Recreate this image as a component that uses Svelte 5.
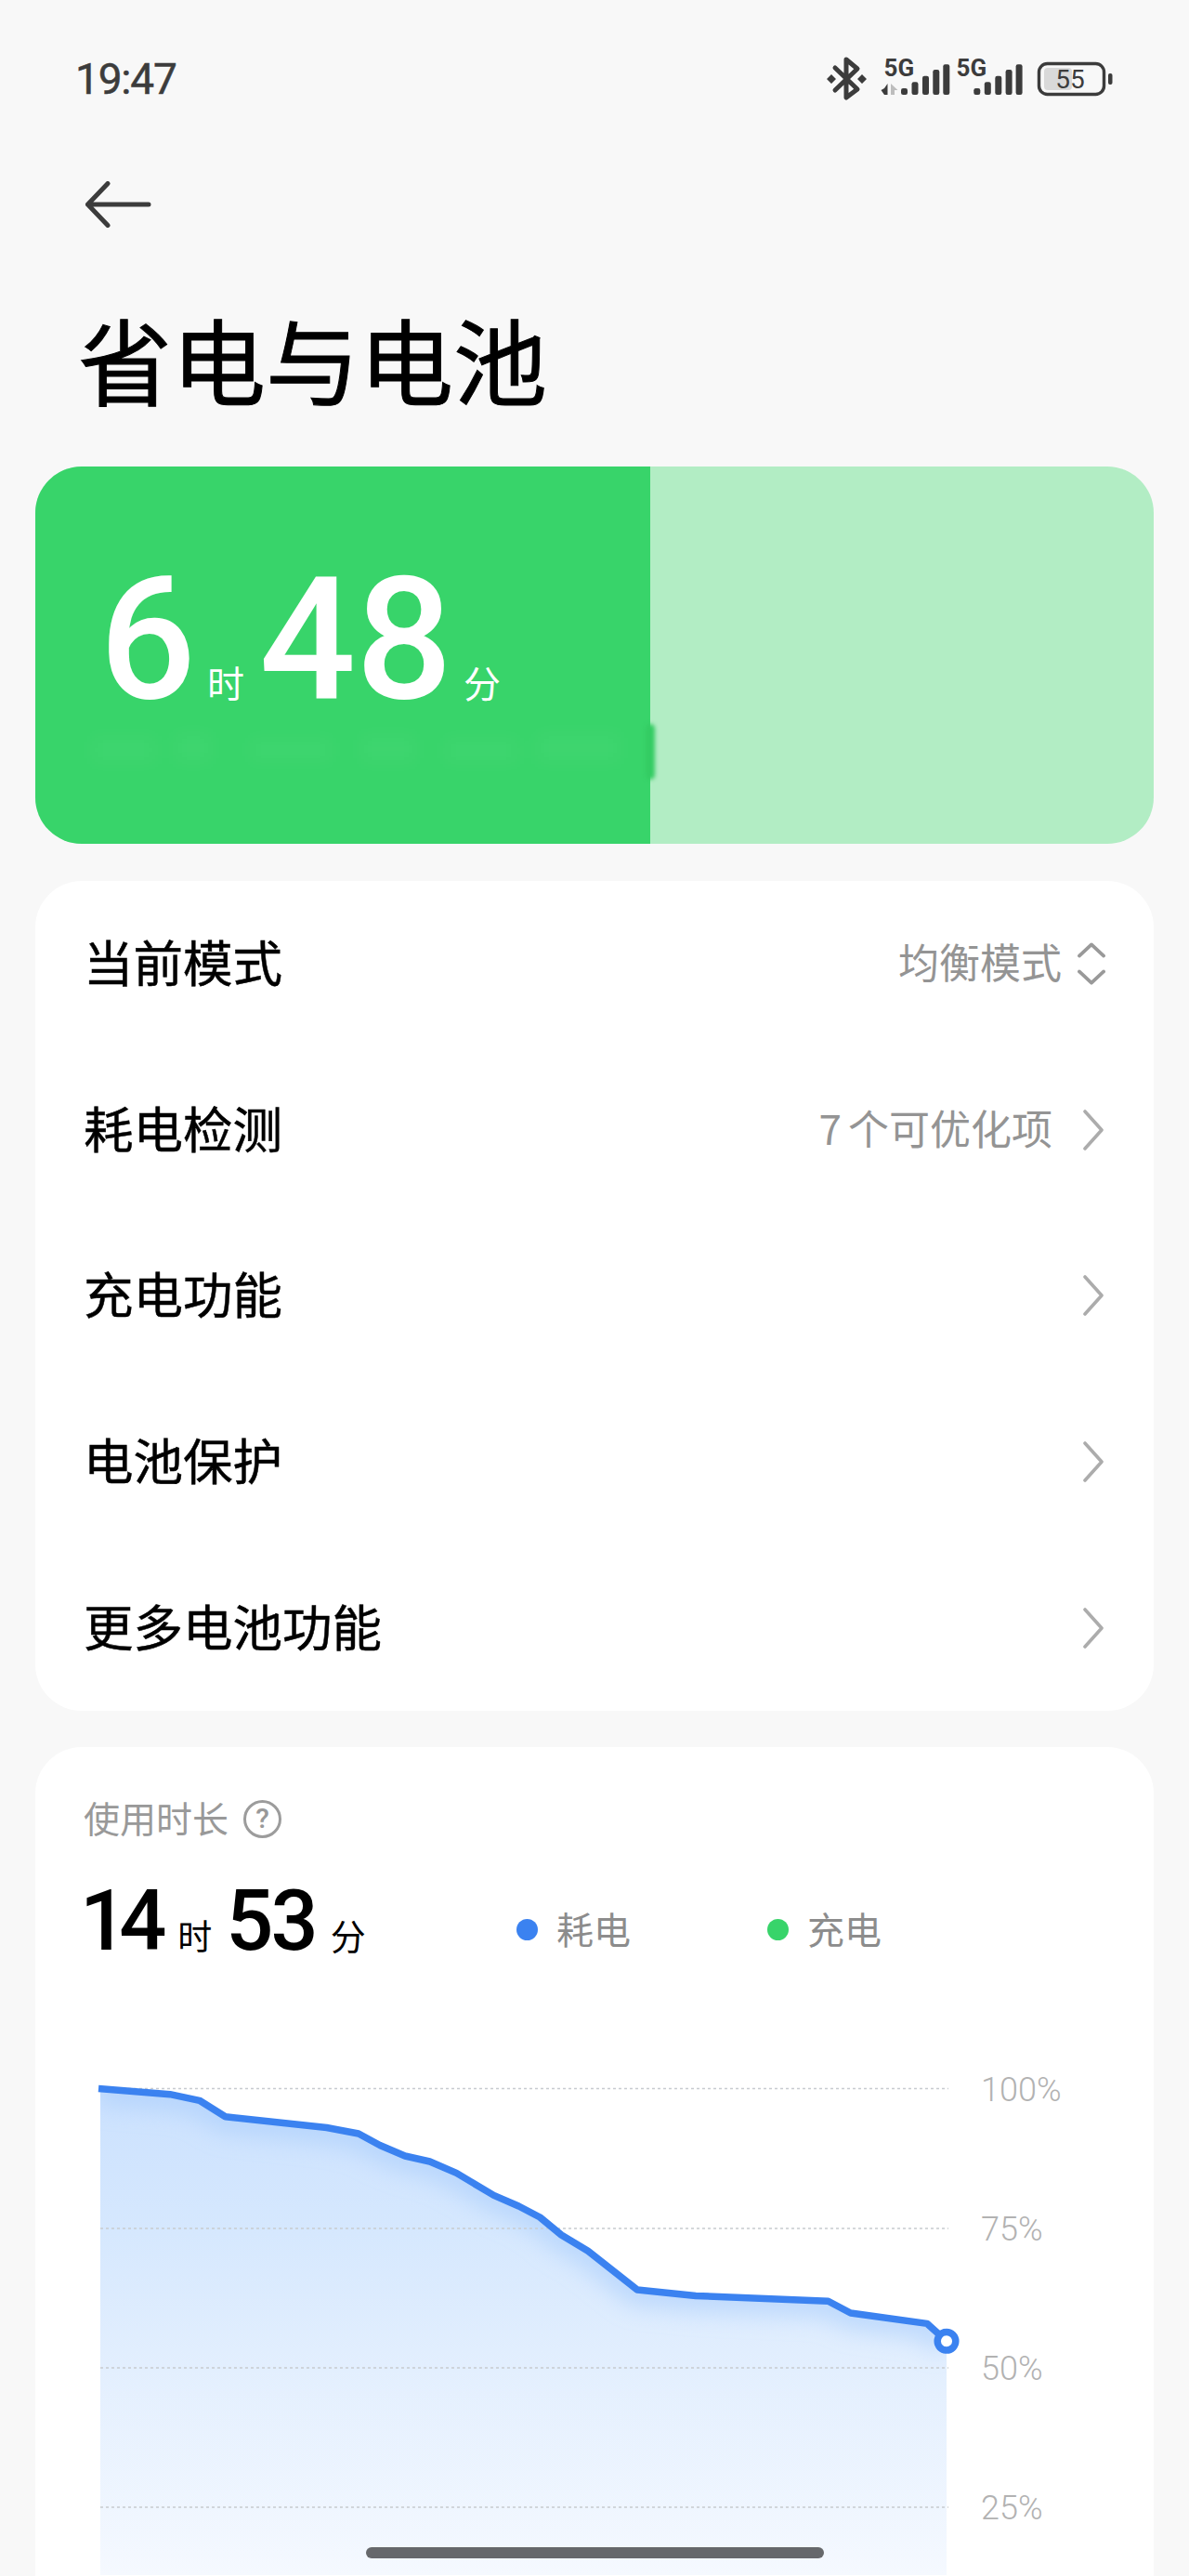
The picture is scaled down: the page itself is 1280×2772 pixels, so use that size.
<script>
  const rows = [
    { label: '当前模式', num: '', value: '均衡模式', kind: 'updown' },
    { label: '耗电检测', num: '7', value: '个可优化项', kind: 'next' },
    { label: '充电功能', num: '', value: '', kind: 'next' },
    { label: '电池保护', num: '', value: '', kind: 'next' },
    { label: '更多电池功能', num: '', value: '', kind: 'next' }
  ];
  const pts = [
    [106,2248.5],[183,2254.7],[214.7,2261.3],[242.6,2278.8],[351.7,2290.5],[386,2297],[409,2309.5],
    [436,2321],[462.7,2327],[491.4,2339.4],[531.6,2363.4],[558.4,2375],[581.3,2387],[604.3,2406],
    [633,2423.3],[686,2465],[749,2471.4],[891.6,2477.3],[915.7,2490],[998,2501.4],[1019,2520.3]
  ];
  const line = pts.map((p) => p.join(',')).join(' ');
  const area = `108,2248.5 ${pts.slice(1).map((p) => p.join(',')).join(' ')} 1019,2772 108,2772`;
  const grid = [
    { y: 2248.5, t: '100%' },
    { y: 2399, t: '75%' },
    { y: 2549, t: '50%' },
    { y: 2699, t: '25%' }
  ];
  const bars = [[0,95],[11.5,88.3],[23,81.7],[34.3,75],[45.3,69.3]];
  const patches = [
    [60,8,70,30],[150,4,40,34],[230,10,90,26],[350,6,60,32],[440,10,80,28],[540,4,90,34]
  ];
</script>

<div class="page">
  <header class="status">
    <span class="clock">19:47</span>
    <svg class="status-icons" viewBox="885 55 320 60" width="320" height="60" aria-hidden="true">
      <g fill="none" stroke="#3c3c3c" stroke-width="5" stroke-linecap="round" stroke-linejoin="round">
        <path d="M899 73 923 96 911 105V64L923 74 899 97" />
      </g>
      <path d="M895 80l5 5-5 5-5-5zM928 80l5 5-5 5-5-5z" fill="#3c3c3c" />
      <text class="five" x="951.5" y="82">5G</text>
      <text class="five" x="1029.5" y="82">5G</text>
      <polygon points="955.5,90 955.5,102 952,102 948.5,97 952,95" fill="#3c3c3c" />
      <polygon points="959,90 966.5,97 963,97 963,102 959,102" fill="#bdbdbd" />
      {#each bars as b}
        <rect x={970 + b[0]} y={b[1]} width="7" height={102 - b[1]} rx="2.2" fill="#3c3c3c" />
        <rect x={1048.3 + b[0]} y={b[1]} width="7" height={102 - b[1]} rx="2.2" fill="#3c3c3c" />
      {/each}
      <rect x="1118.5" y="68.5" width="70" height="33" rx="9" fill="none" stroke="#3c3c3c" stroke-width="3.4" />
      <rect x="1124" y="73" width="30" height="24" rx="4" fill="#d9d9d9" />
      <text class="batt" x="1152" y="95" text-anchor="middle">55</text>
      <rect x="1193" y="79" width="4.5" height="12" rx="2" fill="#3c3c3c" />
    </svg>
  </header>

  <nav class="nav">
    <svg viewBox="0 0 72 50" width="72" height="50" aria-hidden="true">
      <path d="M25 2.5 3.5 25 25 47.5M3.5 25H69" fill="none" stroke="#3c3c3c" stroke-width="5" stroke-linecap="round" stroke-linejoin="round" />
    </svg>
  </nav>

  <h1 class="title">省电与电池</h1>

  <section class="hero">
    <div class="hero-fill">
      <div class="time">
        <span class="big">6</span><span class="unit">时</span><span class="big b2">48</span><span class="unit">分</span>
      </div>
      <div class="smudges">
        {#each patches as p}
          <i class="patch" style="left:{p[0]}px;top:{p[1]}px;width:{p[2]}px;height:{p[3]}px"></i>
        {/each}
      </div>
      <div class="blob"></div>
    </div>
  </section>

  <section class="card menu">
    {#each rows as r}
      <div class="row">
        <span class="label">{r.label}</span>
        {#if r.value}<span class="value">{#if r.num}<span class="vnum">{r.num}</span>{/if}{r.value}</span>{/if}
        {#if r.kind === 'updown'}
          <svg class="updown" viewBox="0 0 32 50" width="32" height="50" aria-hidden="true">
            <path d="M2 16 16 3 30 16M2 34 16 47 30 34" fill="none" stroke="#999" stroke-width="4" stroke-linecap="round" stroke-linejoin="round" />
          </svg>
        {:else}
          <svg class="chev" viewBox="0 0 24 44" width="24" height="44" aria-hidden="true">
            <path d="M3 2 21 22 3 42" fill="none" stroke="#acacac" stroke-width="3.6" stroke-linecap="round" stroke-linejoin="round" />
          </svg>
        {/if}
      </div>
    {/each}
  </section>

  <section class="card usage">
    <div class="usage-title">
      <span>使用时长</span>
      <span class="help">?</span>
    </div>
    <div class="summary">
      <div class="dur">
        <span class="num n1">14</span><span class="du">时</span><span class="num n2">53</span><span class="du d2">分</span>
      </div>
      <div class="legend l1"><i class="dot blue"></i><span>耗电</span></div>
      <div class="legend l2"><i class="dot green"></i><span>充电</span></div>
    </div>
    <svg class="chart" viewBox="38 2230 1204 542" width="1204" height="542" aria-hidden="true">
      <defs>
        <linearGradient id="fade" gradientUnits="userSpaceOnUse" x1="0" y1="2248" x2="0" y2="2772">
          <stop offset="0" stop-color="#cbe1fe" />
          <stop offset="0.3" stop-color="#d6e8fe" />
          <stop offset="0.58" stop-color="#e3effe" />
          <stop offset="1" stop-color="#f5f9ff" />
        </linearGradient>
        <clipPath id="under"><polygon points={area} /></clipPath>
        <filter id="soft" x="-10%" y="-20%" width="120%" height="140%"><feGaussianBlur stdDeviation="12" /></filter>
      </defs>
      <polygon points={area} fill="url(#fade)" />
      <g clip-path="url(#under)">
        <polyline points={line} fill="none" stroke="#a9cdfb" stroke-opacity="0.6" stroke-width="34" filter="url(#soft)" />
      </g>
      {#each grid as g}
        <line x1="108" x2="1021" y1={g.y} y2={g.y} stroke="#c8cbd0" stroke-width="1.6" stroke-dasharray="3 3" />
        <text class="pct" x="1056" y={g.y + 13}>{g.t}</text>
      {/each}
      <polyline points={line} fill="none" stroke="#3b82f0" stroke-width="7.5" stroke-linejoin="round" />
      <circle cx="1019" cy="2520.3" r="9.8" fill="#fff" stroke="#3b82f0" stroke-width="7.5" />
    </svg>
  </section>

  <div class="home"></div>
</div>

<style>
  :global(body) { margin: 0; background: #f8f8f8; }
  .page {
    position: relative;
    width: 1280px;
    height: 2772px;
    overflow: hidden;
    background: #f8f8f8;
    font-family: "Noto Sans CJK SC", "Noto Sans", sans-serif;
    color: #000;
  }
  .status {
    height: 170px;
    display: flex;
    align-items: center;
    justify-content: space-between;
    padding: 0 75px 0 81px;
    box-sizing: border-box;
  }
  .clock {
    font: 400 46px/1 Roboto, sans-serif;
    letter-spacing: -1.2px;
    color: #3c3c3c;
    -webkit-text-stroke: 0.5px #3c3c3c;
  }
  .five { font: 700 26px Roboto, sans-serif; fill: #3c3c3c; }
  .batt { font: 400 28px Roboto, sans-serif; fill: #3c3c3c; }
  .nav {
    height: 100px;
    padding-left: 91px;
    display: flex;
    align-items: center;
  }
  .title {
    margin: 65px 0 67px 84px;
    height: 100px;
    font-size: 101px;
    line-height: 100px;
    font-weight: 400;
    -webkit-text-stroke: 1px #000;
    color: #000;
  }
  .hero {
    margin: 0 38px;
    height: 406px;
    border-radius: 50px;
    overflow: hidden;
    background: #b2edc4;
  }
  .hero-fill {
    position: relative;
    width: 662px;
    height: 100%;
    background: #38d46a;
  }
  .time {
    display: flex;
    align-items: baseline;
    height: 270px;
    padding: 112px 0 0 69px;
    box-sizing: border-box;
    color: #fff;
    line-height: 150px;
  }
  .big { font: 500 183px/150px Roboto, sans-serif; }
  .b2 { margin-left: 16px; }
  .unit { font-size: 40px; line-height: 38px; margin-left: 12px; }
  .smudges {
    position: absolute;
    left: 0;
    top: 282px;
    width: 640px;
    height: 46px;
    filter: blur(9px);
  }
  .patch {
    position: absolute;
    display: block;
    background: rgba(255, 255, 255, 0.03);
  }
  .blob {
    position: absolute;
    left: 657px;
    top: 277px;
    width: 10px;
    height: 60px;
    border-radius: 5px;
    background: #34cc63;
    filter: blur(2px);
  }
  .card {
    margin: 0 38px;
    background: #fff;
    border-radius: 50px;
  }
  .menu { margin-top: 40px; height: 893px; }
  .row {
    height: 178.6px;
    display: flex;
    align-items: center;
    padding: 0 53px 0 52px;
    box-sizing: border-box;
  }
  .label {
    font-size: 53.5px;
    line-height: 60px;
    flex: 1;
    color: #000;
    margin-bottom: 6px;
    -webkit-text-stroke: 0.5px #000;
  }
  .value { font-size: 44px; line-height: 50px; color: #949494; margin-bottom: 6px; }
  .vnum { margin-right: 7px; }
  .updown { margin: 0 -1px 0 17px; width: 30px; }
  .chev { margin-left: 32px; }
  .usage { margin-top: 39px; height: 960px; padding-top: 1px; }
  .usage-title {
    display: flex;
    align-items: center;
    gap: 16px;
    height: 42px;
    margin: 53px 0 0 52px;
    font-size: 39px;
    line-height: 42px;
    color: #999;
  }
  .help {
    width: 35px;
    height: 35px;
    border: 3.5px solid #9c9c9c;
    border-radius: 50%;
    display: flex;
    align-items: center;
    justify-content: center;
    font: 500 30px/1 Roboto, sans-serif;
    margin-top: 4px;
  }
  .summary {
    display: flex;
    align-items: flex-start;
    margin: 0 0 0 52px;
    height: 253px;
    box-sizing: border-box;
  }
  .dur { display: flex; align-items: baseline; width: 466px; margin-top: 57px; }
  .num { font: 500 90px/70px Roboto, sans-serif; color: #000; }
  .n1 { letter-spacing: -9px; margin-left: -4px; }
  .n2 { margin-left: 15px; letter-spacing: -3px; }
  .du { font-size: 37px; line-height: 40px; margin-left: 21px; }
  .d2 { font-size: 38px; margin-left: 16px; }
  .legend {
    display: flex;
    align-items: center;
    gap: 20px;
    font-size: 40px;
    line-height: 44px;
    color: #8c8c8c;
    margin-top: 77px;
  }
  .l1 { width: 270px; }
  .dot { width: 23px; height: 23px; border-radius: 50%; display: block; margin-top: 2px; }
  .blue { background: #3b82f0; }
  .green { background: #38d46a; }
  .chart { display: block; }
  .pct { font: 300 36px Roboto, sans-serif; fill: #b2b2b2; }
  .home {
    position: absolute;
    left: 394px;
    top: 2741px;
    width: 493px;
    height: 12px;
    border-radius: 6px;
    background: #66686b;
  }
</style>
